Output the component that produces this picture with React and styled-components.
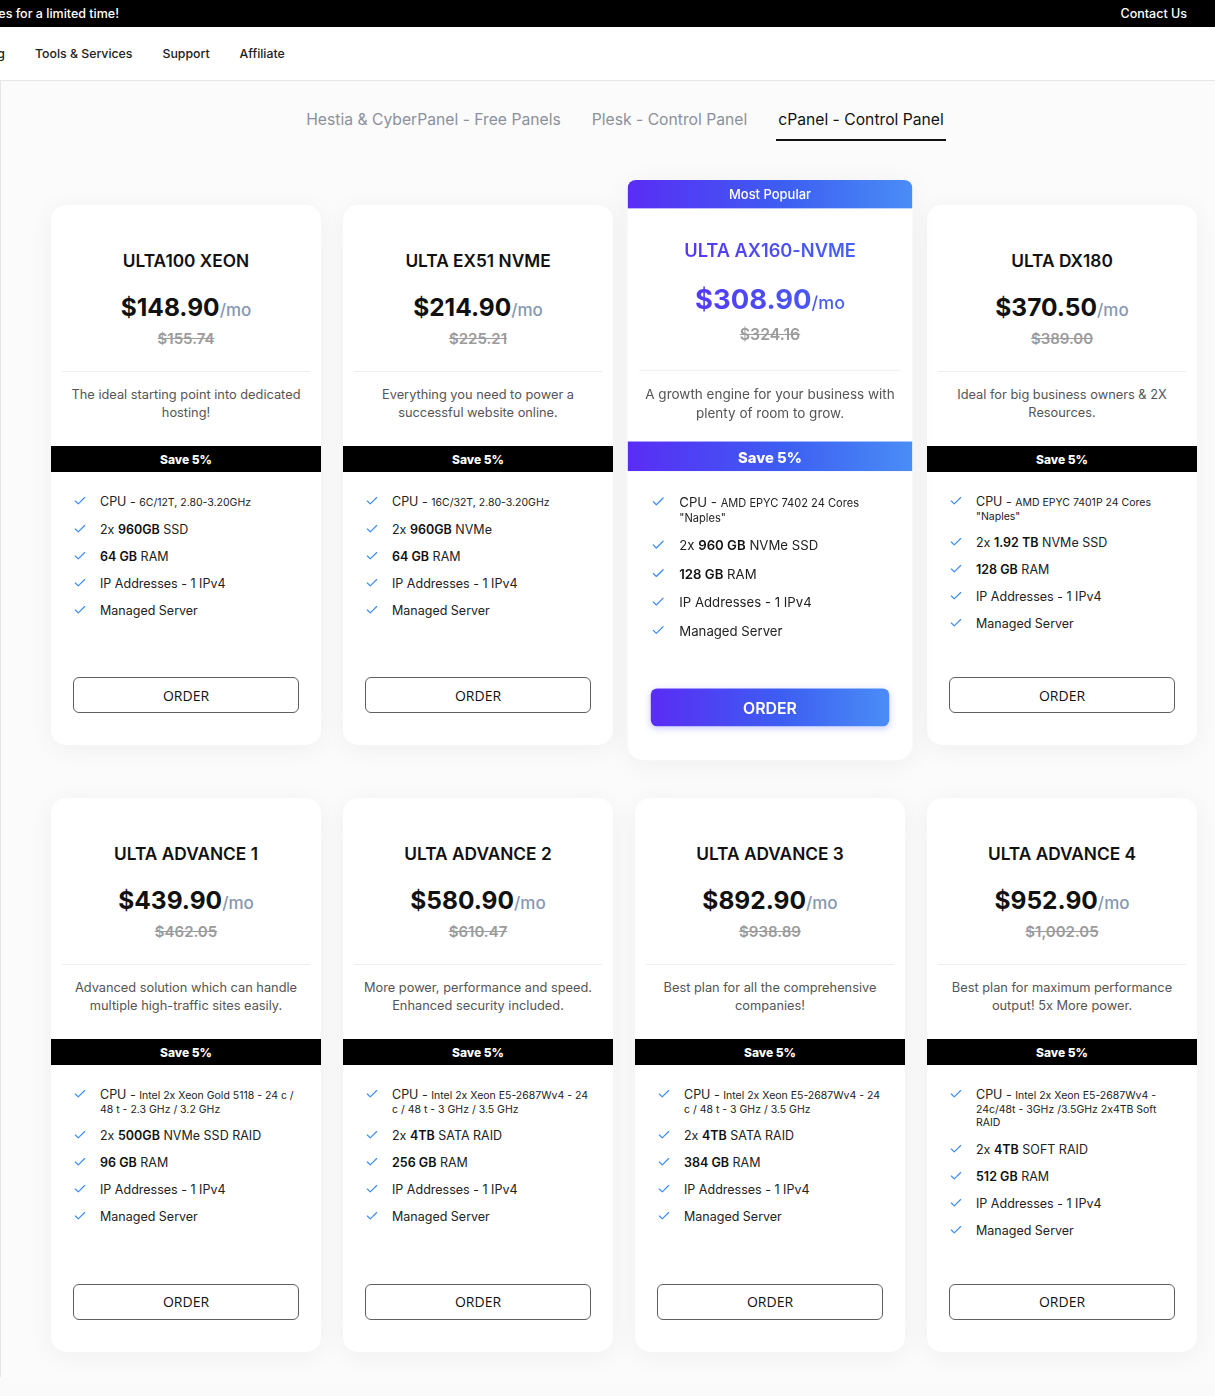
import React from "react";
import styled, { createGlobalStyle, css } from "styled-components";
import { Check } from "lucide-react";

const GlobalStyle = createGlobalStyle`
  body {
    margin: 0;
    background: #fafafa;
    font-family: Inter, "Open Sans", sans-serif;
    font-feature-settings: "calt" 0;
    overflow-x: hidden;
  }
`;

const gradient = "linear-gradient(90deg, #5a2cf5 0%, #3d5ef2 55%, #4a8df6 100%)";

const TopBar = styled.div`
  height: 27px;
  background: #000;
  color: #fff;
  display: flex;
  align-items: center;
  justify-content: space-between;
  padding-right: 28px;
  font-size: 12.5px;
  font-weight: 500;
`;

const Clip = styled.div`
  width: ${(p) => p.$w}px;
  overflow: hidden;
  display: flex;
  justify-content: flex-end;
  white-space: nowrap;
  flex-shrink: 0;
`;

const NavBar = styled.nav`
  height: 53px;
  background: #fff;
  border-bottom: 1px solid #e7e7e7;
  display: flex;
  align-items: center;
  gap: 30px;
  font-size: 12.3px;
  font-weight: 500;
  color: #222;
`;

const Main = styled.main`
  width: 1248px;
  border-left: 1px solid #e6e6e6;
  background: #fbfbfb;
  padding-bottom: 25px;
`;

const Tabs = styled.div`
  display: flex;
  justify-content: center;
  gap: 27px;
  padding-top: 29px;
`;

const Tab = styled.div`
  padding: 0 2px 9px;
  font-size: 15.7px;
  line-height: 20px;
  color: ${(p) => (p.$active ? "#111" : "#8c909b")};
  border-bottom: 2px solid ${(p) => (p.$active ? "#111" : "transparent")};
`;

const Grid = styled.div`
  display: grid;
  grid-template-columns: repeat(4, 270px);
  column-gap: 22px;
  row-gap: 53px;
  padding-left: 50px;
  margin-top: 64px;
`;

const Card = styled.div`
  background: #fff;
  border-radius: 15px;
  box-shadow: 0 4px 26px rgba(0, 0, 0, 0.05);
  display: flex;
  flex-direction: column;
  overflow: hidden;
  ${(p) =>
    p.$popular &&
    css`
      transform: scale(1.055);
      margin-top: -10px;
      border-radius: 8px 8px 15px 15px;
      position: relative;
      z-index: 1;
    `}
`;

const PopularHead = styled.div`
  height: 27px;
  background: ${gradient};
  color: #fff;
  font-size: 12.3px;
  font-weight: 500;
  display: flex;
  align-items: center;
  justify-content: center;
`;

const Top = styled.div`
  text-align: center;
  padding: ${(p) => (p.$popular ? "28px 11px 17px" : "44px 11px 24px")};
`;

const gradText = css`
  background: linear-gradient(90deg, #5a2cf5, #3f6ef3);
  -webkit-background-clip: text;
  background-clip: text;
  color: transparent;
`;

const Title = styled.h3`
  margin: 0;
  font-size: 17.3px;
  line-height: 24px;
  font-weight: 600;
  color: #111;
  ${(p) => p.$popular && gradText}
`;

const Price = styled.div`
  margin-top: 17px;
  line-height: 34px;
  font-size: ${(p) => (p.$popular ? 26 : 24.5)}px;
  font-weight: 700;
  color: #111;
  ${(p) => p.$popular && gradText}
`;

const Per = styled.span`
  font-size: 17px;
  font-weight: 500;
  color: ${(p) => (p.$popular ? "transparent" : "#8797b2")};
`;

const OldPrice = styled.div`
  margin-top: ${(p) => (p.$popular ? 4 : 2)}px;
  line-height: 20px;
  font-size: 15px;
  font-weight: 600;
  color: #9b9b9b;
  text-decoration: line-through;
`;

const Divider = styled.div`
  margin-top: ${(p) => (p.$popular ? 23 : 22)}px;
  height: 1px;
  background: #efefef;
`;

const Desc = styled.p`
  margin: 14px 0 0;
  padding: 0 ${(p) => (p.$popular ? 2 : 8)}px;
  font-size: 12.8px;
  line-height: 18px;
  color: #555;
`;

const Band = styled.div`
  height: ${(p) => (p.$popular ? 28 : 26)}px;
  background: ${(p) => (p.$popular ? gradient : "#000")};
  color: #fff;
  font-size: ${(p) => (p.$popular ? 14 : 12)}px;
  font-weight: 800;
  display: flex;
  align-items: center;
  justify-content: center;
`;

const List = styled.ul`
  list-style: none;
  margin: 0;
  padding: 23px 22px 0;
  min-height: 134px;
  display: flex;
  flex-direction: column;
  gap: 14px;
`;

const Item = styled.li`
  display: flex;
  gap: 13px;
  align-items: flex-start;
  font-size: 12.5px;
  line-height: 13px;
  color: #222;
  svg {
    flex-shrink: 0;
    margin-top: -1px;
  }
  b {
    font-weight: 600;
    color: #111;
  }
`;

const Small = styled.span`
  font-size: 10.5px;
  line-height: 1;
`;

const ButtonWrap = styled.div`
  margin-top: auto;
  padding: 47px 22px 32px;
`;

const OrderButton = styled.button`
  width: 100%;
  height: 36px;
  border-radius: 6px;
  cursor: pointer;
  ${(p) =>
    p.$popular
      ? css`
          border: none;
          background: ${gradient};
          color: #fff;
          font-family: Inter, sans-serif;
          font-size: 15px;
          font-weight: 600;
          box-shadow: 0 2px 6px rgba(60, 80, 240, 0.25);
        `
      : css`
          border: 1.5px solid #5f5f5f;
          background: #fff;
          color: #111;
          font-family: "Open Sans", sans-serif;
          font-size: 14px;
        `}
`;

const plans = [
  {
    name: "ULTA100 XEON",
    price: "$148.90",
    old: "$155.74",
    desc: "The ideal starting point into dedicated hosting!",
    cpu: "6C/12T, 2.80-3.20GHz",
    disk: ["2x ", "960GB", " SSD"],
    ram: "64 GB",
  },
  {
    name: "ULTA EX51 NVME",
    price: "$214.90",
    old: "$225.21",
    desc: "Everything you need to power a successful website online.",
    cpu: "16C/32T, 2.80-3.20GHz",
    disk: ["2x ", "960GB", " NVMe"],
    ram: "64 GB",
  },
  {
    name: "ULTA AX160-NVME",
    price: "$308.90",
    old: "$324.16",
    desc: "A growth engine for your business with plenty of room to grow.",
    cpu: 'AMD EPYC 7402 24 Cores "Naples"',
    disk: ["2x ", "960 GB", " NVMe SSD"],
    ram: "128 GB",
    popular: true,
  },
  {
    name: "ULTA DX180",
    price: "$370.50",
    old: "$389.00",
    desc: "Ideal for big business owners & 2X Resources.",
    cpu: 'AMD EPYC 7401P 24 Cores "Naples"',
    disk: ["2x ", "1.92 TB", " NVMe SSD"],
    ram: "128 GB",
  },
  {
    name: "ULTA ADVANCE 1",
    price: "$439.90",
    old: "$462.05",
    desc: "Advanced solution which can handle multiple high-traffic sites easily.",
    cpu: "Intel 2x Xeon Gold 5118 - 24 c / 48 t - 2.3 GHz / 3.2 GHz",
    disk: ["2x ", "500GB", " NVMe SSD RAID"],
    ram: "96 GB",
  },
  {
    name: "ULTA ADVANCE 2",
    price: "$580.90",
    old: "$610.47",
    desc: "More power, performance and speed. Enhanced security included.",
    cpu: "Intel 2x Xeon E5-2687Wv4 - 24 c / 48 t - 3 GHz / 3.5 GHz",
    disk: ["2x ", "4TB", " SATA RAID"],
    ram: "256 GB",
  },
  {
    name: "ULTA ADVANCE 3",
    price: "$892.90",
    old: "$938.89",
    desc: "Best plan for all the comprehensive companies!",
    cpu: "Intel 2x Xeon E5-2687Wv4 - 24 c / 48 t - 3 GHz / 3.5 GHz",
    disk: ["2x ", "4TB", " SATA RAID"],
    ram: "384 GB",
  },
  {
    name: "ULTA ADVANCE 4",
    price: "$952.90",
    old: "$1,002.05",
    desc: "Best plan for maximum performance output! 5x More power.",
    cpu: "Intel 2x Xeon E5-2687Wv4 - 24c/48t - 3GHz /3.5GHz 2x4TB Soft RAID",
    disk: ["2x ", "4TB", " SOFT RAID"],
    ram: "512 GB",
  },
];

function Feature({ children }) {
  return (
    <Item>
      <Check size={14} strokeWidth={2} color="#3b8cf5" />
      <span>{children}</span>
    </Item>
  );
}

function PlanCard({ plan }) {
  const pop = plan.popular;
  return (
    <Card $popular={pop}>
      {pop && <PopularHead>Most Popular</PopularHead>}
      <Top $popular={pop}>
        <Title $popular={pop}>{plan.name}</Title>
        <Price $popular={pop}>
          {plan.price}
          <Per $popular={pop}>/mo</Per>
        </Price>
        <OldPrice $popular={pop}>{plan.old}</OldPrice>
        <Divider $popular={pop} />
        <Desc $popular={pop}>{plan.desc}</Desc>
      </Top>
      <Band $popular={pop}>Save 5%</Band>
      <List>
        <Feature>
          CPU - <Small>{plan.cpu}</Small>
        </Feature>
        <Feature>
          {plan.disk[0]}
          <b>{plan.disk[1]}</b>
          {plan.disk[2]}
        </Feature>
        <Feature>
          <b>{plan.ram}</b> RAM
        </Feature>
        <Feature>IP Addresses - 1 IPv4</Feature>
        <Feature>Managed Server</Feature>
      </List>
      <ButtonWrap>
        <OrderButton $popular={pop}>ORDER</OrderButton>
      </ButtonWrap>
    </Card>
  );
}

export default function App() {
  return (
    <>
      <GlobalStyle />
      <TopBar>
        <Clip $w={119}>Get exclusive prices for a limited time!</Clip>
        <span>Contact Us</span>
      </TopBar>
      <NavBar>
        <Clip $w={5}>Hosting</Clip>
        <span>Tools &amp; Services</span>
        <span>Support</span>
        <span>Affiliate</span>
      </NavBar>
      <Main>
        <Tabs>
          <Tab>Hestia &amp; CyberPanel - Free Panels</Tab>
          <Tab>Plesk - Control Panel</Tab>
          <Tab $active>cPanel - Control Panel</Tab>
        </Tabs>
        <Grid>
          {plans.map((p) => (
            <PlanCard key={p.name} plan={p} />
          ))}
        </Grid>
      </Main>
    </>
  );
}
